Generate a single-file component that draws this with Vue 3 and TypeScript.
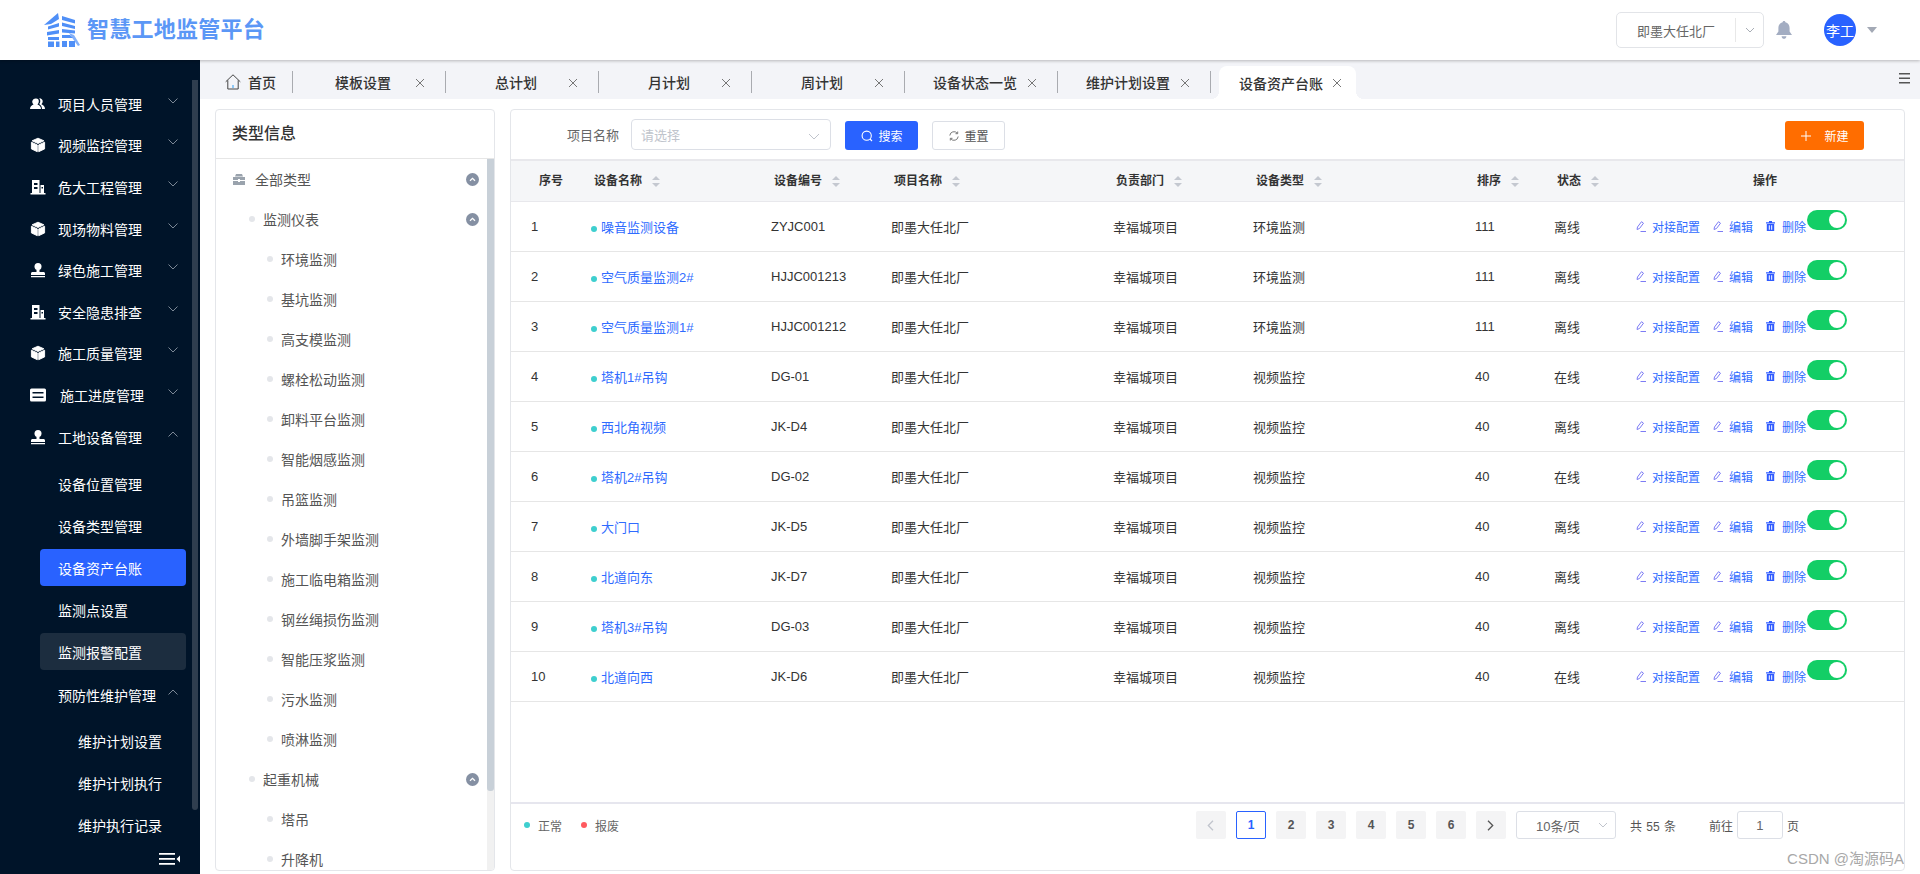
<script setup lang="ts">
interface MenuItem { label: string; icon: string; open?: boolean; nudge?: boolean }
interface TreeNode { label: string; level: number; collapsible?: boolean }
interface Row { id: number; name: string; code: string; sort: number; type: string; state: string }

const menu: MenuItem[] = [
  { label: '项目人员管理', icon: 'users' },
  { label: '视频监控管理', icon: 'cube' },
  { label: '危大工程管理', icon: 'building' },
  { label: '现场物料管理', icon: 'cube' },
  { label: '绿色施工管理', icon: 'stamp' },
  { label: '安全隐患排查', icon: 'building' },
  { label: '施工质量管理', icon: 'cube' },
  { label: '施工进度管理', icon: 'server', nudge: true },
  { label: '工地设备管理', icon: 'stamp', open: true },
]
const subMenu = ['设备位置管理', '设备类型管理', '设备资产台账', '监测点设置', '监测报警配置']
const thirdMenu = ['维护计划设置', '维护计划执行', '维护执行记录']

const tabs = ['模板设置', '总计划', '月计划', '周计划', '设备状态一览', '维护计划设置']

const tree: TreeNode[] = [
  { label: '全部类型', level: 0, collapsible: true },
  { label: '监测仪表', level: 1, collapsible: true },
  ...['环境监测', '基坑监测', '高支模监测', '螺栓松动监测', '卸料平台监测', '智能烟感监测', '吊篮监测', '外墙脚手架监测', '施工临电箱监测', '钢丝绳损伤监测', '智能压浆监测', '污水监测', '喷淋监测'].map((label) => ({ label, level: 2 })),
  { label: '起重机械', level: 1, collapsible: true },
  { label: '塔吊', level: 2 },
  { label: '升降机', level: 2 },
]

const heads = [
  { label: '设备名称', cls: 'h-name' },
  { label: '设备编号', cls: 'h-code' },
  { label: '项目名称', cls: 'h-project' },
  { label: '负责部门', cls: 'h-dept' },
  { label: '设备类型', cls: 'h-type' },
  { label: '排序', cls: 'h-sort' },
  { label: '状态', cls: 'h-state' },
]

const rows: Row[] = [
  { id: 1, name: '噪音监测设备', code: 'ZYJC001', sort: 111, type: '环境监测', state: '离线' },
  { id: 2, name: '空气质量监测2#', code: 'HJJC001213', sort: 111, type: '环境监测', state: '离线' },
  { id: 3, name: '空气质量监测1#', code: 'HJJC001212', sort: 111, type: '环境监测', state: '离线' },
  { id: 4, name: '塔机1#吊钩', code: 'DG-01', sort: 40, type: '视频监控', state: '在线' },
  { id: 5, name: '西北角视频', code: 'JK-D4', sort: 40, type: '视频监控', state: '离线' },
  { id: 6, name: '塔机2#吊钩', code: 'DG-02', sort: 40, type: '视频监控', state: '在线' },
  { id: 7, name: '大门口', code: 'JK-D5', sort: 40, type: '视频监控', state: '离线' },
  { id: 8, name: '北道向东', code: 'JK-D7', sort: 40, type: '视频监控', state: '离线' },
  { id: 9, name: '塔机3#吊钩', code: 'DG-03', sort: 40, type: '视频监控', state: '离线' },
  { id: 10, name: '北道向西', code: 'JK-D6', sort: 40, type: '视频监控', state: '在线' },
]
const pages = [1, 2, 3, 4, 5, 6]
</script>

<template>
  <div class="page">
    <header class="topbar">
      <div class="logo">
        <svg class="logo-mark" width="36" height="34" viewBox="0 0 36 34" fill="#4f8ff7">
          <path d="M0 12 14 0l1 6-8 5z" />
          <path d="M4 13.500 15 10v3.500L4 16.500zM3 19l12-2v3.500L3 22.500zM4 24h11v3H4zM4 28.500h6V34H4zM12 28.500h3.500V34H12z" />
          <path d="M18 3l13 4v3.500L18 7zM18 9.500l13 3.500v3L18 13zM18 16l13 1.500v3L18 19.500zM18 22h8l3 3H18zM18 28h5v6h-5zM25 28h6v6h-6z" />
          <path d="M25 20l5 2 6 10-2 1-5-7z" opacity=".7" />
        </svg>
        <span class="logo-text">智慧工地监管平台</span>
      </div>
      <div class="top-right">
        <div class="plant">
          <span class="plant-name">即墨大任北厂</span>
          <span class="plant-arrow">
            <svg width="10" height="6" viewBox="0 0 10 6" fill="none" stroke="#a8adb5"><path d="M1 1l4 4 4-4" /></svg>
          </span>
        </div>
        <svg class="bell" width="16" height="18" viewBox="0 0 16 18" fill="#a3adc2">
          <path d="M8 0c.8 0 1.300.5 1.400 1.300C12 2 13.600 4.200 13.600 7v3.600L16 14H0l2.400-3.400V7c0-2.800 1.600-5 4.200-5.700C6.700.5 7.200 0 8 0z" />
          <path d="M5.600 15.200h4.800c0 1.500-1 2.600-2.400 2.600s-2.400-1.100-2.400-2.600z" />
        </svg>
        <span class="avatar">李工</span>
        <span class="caret"></span>
      </div>
    </header>

    <div class="body">
      <aside class="side">
        <nav class="menu">
          <div v-for="m in menu" :key="m.label" class="m-item">
            <svg class="m-icon" width="16" height="16" viewBox="0 0 16 16" fill="#fff">
              <template v-if="m.icon === 'users'">
                <path d="M6 2.500a2.800 2.800 0 0 1 2.800 3c0 1.200-.6 2.300-1.300 2.900 2.200.6 3.500 2.300 3.500 4.600H0c0-2.300 1.400-4 3.500-4.600C2.800 7.800 2.200 6.700 2.200 5.500A3.800 3.800 0 0 1 6 2.500z" />
                <path d="M9.500 2.200c1.800 0 3.200 1.300 3.200 3.100 0 1.200-.5 2.200-1.300 2.900 2 .7 3.600 2.300 3.600 4.800h-3c0-2.300-1.100-4-2.800-5 .8-.9 1.100-1.800 1.100-2.800 0-1.200-.5-2.200-1.200-2.900z" />
              </template>
              <template v-else-if="m.icon === 'cube'">
                <g stroke="#fff" stroke-width=".9" stroke-linejoin="round">
                  <path d="M8 1.200l5.900 2.600L8 6.500 2.100 3.800z" />
                  <path d="M1.400 5.200l5.900 2.700v6.800l-5.900-2.800z" />
                  <path d="M14.600 5.200 8.700 7.900v6.800l5.900-2.800z" />
                </g>
              </template>
              <template v-else-if="m.icon === 'building'">
                <path fill-rule="evenodd" d="M2 1h7.500v13H2zM4 4v2h3.500V4zM4 8v2h3.500V8zM10.500 6H14v8h-3.500zM11.500 8v1.500H13V8zM.5 14h15v1.500H.5z" />
              </template>
              <template v-else-if="m.icon === 'stamp'">
                <circle cx="8" cy="4.500" r="3.500" />
                <path d="M6.500 7h3v3h4c.8 0 1.500.7 1.500 1.500V13H1v-1.500C1 10.700 1.700 10 2.500 10h4zM1 14h14v1.300H1z" />
              </template>
              <template v-else>
                <path fill-rule="evenodd" d="M1.500 1.500h13A1.500 1.500 0 0 1 16 3v10a1.500 1.500 0 0 1-1.500 1.500h-13A1.500 1.500 0 0 1 0 13V3a1.500 1.500 0 0 1 1.500-1.500zM2.500 5v1.400h11V5zM2.500 9.600V11h11V9.600z" />
              </template>
            </svg>
            <span class="m-label" :class="{ nudge: m.nudge }">{{ m.label }}</span>
            <svg class="chev" width="10" height="6" viewBox="0 0 10 6" fill="none" stroke="#7c8896">
              <path :d="m.open ? 'M.5 5.500 5 1l4.500 4.500' : 'M.5.500 5 5 9.500.500'" />
            </svg>
          </div>

          <div class="sub">
            <div
              v-for="s in subMenu"
              :key="s"
              class="s-item"
              :class="{ active: s === '设备资产台账', hover: s === '监测报警配置' }"
            >{{ s }}</div>
          </div>

          <div class="m-item m-prevent">
            <span class="m-label">预防性维护管理</span>
            <svg class="chev" width="10" height="6" viewBox="0 0 10 6" fill="none" stroke="#7c8896">
              <path d="M.5 5.500 5 1l4.500 4.500" />
            </svg>
          </div>
          <div class="third">
            <div v-for="t in thirdMenu" :key="t" class="t-item">{{ t }}</div>
          </div>
        </nav>
        <div class="side-foot">
          <svg width="21" height="12" viewBox="0 0 21 12" fill="#fff">
            <path d="M0 0h16v1.800H0zM0 5h16v1.800H0zM0 10h16v1.800H0zM21 2.500v7L17.500 6z" />
          </svg>
        </div>
        <div class="side-scroll"></div>
      </aside>

      <main class="main">
        <div class="tabbar">
          <div class="tab tab-home">
            <svg width="16" height="16" viewBox="0 0 16 16" fill="none" stroke="#444">
              <path d="M.7 7.800 8 .8l7.300 7M2.800 6.300V15h10.400V6.300" />
              <path d="M8 11v3" stroke="#2a9df4" />
            </svg>
            <span class="tab-title">首页</span>
          </div>
          <div v-for="t in tabs" :key="t" class="tab">
            <span class="tab-text tab-title">{{ t }}</span>
            <svg class="tab-x" width="12" height="12" viewBox="0 0 12 12" fill="none" stroke="#777">
              <path d="M2 2l8 8M10 2l-8 8" />
            </svg>
          </div>
          <div class="tab-active">
            <span class="tab-title">设备资产台账</span>
            <svg class="tab-x" width="12" height="12" viewBox="0 0 12 12" fill="none" stroke="#777">
              <path d="M2 2l8 8M10 2l-8 8" />
            </svg>
          </div>
          <svg class="tab-menu" width="11" height="11" viewBox="0 0 11 11" fill="#555">
            <path d="M0 0h11v1.500H0zM0 4.500h11V6H0zM0 9h11v1.500H0z" />
          </svg>
        </div>

        <div class="content">
          <section class="types">
            <h2 class="types-title">类型信息</h2>
            <div class="types-body">
              <ul class="tree">
                <li v-for="n in tree" :key="n.label" class="node" :class="'lv' + n.level">
                  <svg v-if="n.level === 0" width="12" height="11" viewBox="0 0 12 11" fill="#9aa3ad">
                    <path d="M3 0h6l1 2.500H2zM0 3h12v3H7V5H5v1H0zM0 7h5v1h2V7h5v4H0z" />
                  </svg>
                  <span v-else class="node-dot"></span>
                  <span class="node-label">{{ n.label }}</span>
                  <svg v-if="n.collapsible" class="node-toggle" width="13" height="13" viewBox="0 0 13 13">
                    <circle cx="6.500" cy="6.500" r="6.500" fill="#8590a3" />
                    <path d="M4 7.700l2.500-2.400L9 7.700" fill="none" stroke="#fff" stroke-width="1.300" />
                  </svg>
                </li>
              </ul>
              <div class="track"><div class="thumb"></div></div>
            </div>
          </section>

          <section class="list">
            <div class="toolbar">
              <span class="f-label">项目名称</span>
              <div class="f-select">
                <span>请选择</span>
                <svg width="12" height="7" viewBox="0 0 12 7" fill="none" stroke="#c0c4cc"><path d="M1 1l5 5 5-5" /></svg>
              </div>
              <button class="btn btn-blue" type="button">
                <svg width="12" height="12" viewBox="0 0 12 12" fill="none" stroke="#fff" stroke-width="1.100">
                  <circle cx="5.700" cy="5.700" r="4.600" /><path d="M9 9l2 2" />
                </svg>
                搜索
              </button>
              <button class="btn btn-plain" type="button">
                <svg width="10" height="10" viewBox="0 0 10 10" fill="none" stroke="#777">
                  <path d="M.8 4.500A4.200 4.200 0 0 1 8.300 2.300M9.200 5.500A4.200 4.200 0 0 1 1.700 7.700" />
                  <path d="M8.700.5v2.200H6.500M1.300 9.500V7.300h2.200" />
                </svg>
                重置
              </button>
              <button class="btn btn-orange" type="button">
                <svg width="12" height="12" viewBox="0 0 12 12" fill="none" stroke="#fff"><path d="M6 1v10M1 6h10" /></svg>
                新建
              </button>
            </div>

            <div class="table-wrap">
              <table class="table">
                <colgroup>
                  <col class="c1" /><col class="c2" /><col class="c3" /><col class="c4" />
                  <col class="c5" /><col class="c6" /><col class="c7" /><col class="c8" /><col />
                </colgroup>
                <thead>
                  <tr>
                    <th class="h-index">序号</th>
                    <th v-for="h in heads" :key="h.label" :class="h.cls">
                      <span class="th-in">
                        {{ h.label }}
                        <svg width="8" height="11" viewBox="0 0 8 11" fill="#c4c8d0">
                          <path d="M4 0l4 4H0zM0 7h8l-4 4z" />
                        </svg>
                      </span>
                    </th>
                    <th class="h-ops">操作</th>
                  </tr>
                </thead>
                <tbody>
                  <tr v-for="r in rows" :key="r.id">
                    <td class="t-index">{{ r.id }}</td>
                    <td class="t-name"><span class="live-dot"></span><a class="link">{{ r.name }}</a></td>
                    <td>{{ r.code }}</td>
                    <td>即墨大任北厂</td>
                    <td>幸福城项目</td>
                    <td>{{ r.type }}</td>
                    <td>{{ r.sort }}</td>
                    <td>{{ r.state }}</td>
                    <td>
                      <div class="ops">
                        <span class="op op-wide">
                          <svg width="10" height="11" viewBox="0 0 10 11" fill="none" stroke="#7d7cf5">
                            <path d="M1 8.500 1.500 6l4-5.300 2 1.500-4 5.300zM4.500 10.500H10" />
                          </svg>
                          对接配置
                        </span>
                        <span class="op">
                          <svg width="10" height="11" viewBox="0 0 10 11" fill="none" stroke="#7d7cf5">
                            <path d="M1 8.500 1.500 6l4-5.300 2 1.500-4 5.300zM4.500 10.500H10" />
                          </svg>
                          编辑
                        </span>
                        <span class="op">
                          <svg width="9" height="10" viewBox="0 0 9 10" fill="#2f5bff">
                            <path fill-rule="evenodd" d="M3 0h3v1.200h3V2.400H0V1.200h3zM.8 3h7.400v7H.8zM2.800 4.200v4.600h1V4.200zM5.200 4.200v4.600h1V4.200z" />
                          </svg>
                          删除
                        </span>
                        <span class="switch"><span class="knob"></span></span>
                      </div>
                    </td>
                  </tr>
                </tbody>
              </table>
            </div>

            <footer class="foot">
              <div class="legend">
                <span class="lg-dot teal"></span><span class="lg-text">正常</span>
                <span class="lg-dot red"></span><span class="lg-text">报废</span>
              </div>
              <div class="pager">
                <span class="pg">
                  <svg width="7" height="11" viewBox="0 0 7 11" fill="none" stroke="#c0c4cc" stroke-width="1.300"><path d="M6 .8 1.300 5.500 6 10.200" /></svg>
                </span>
                <span v-for="p in pages" :key="p" class="pg" :class="{ on: p === 1 }">{{ p }}</span>
                <span class="pg">
                  <svg width="7" height="11" viewBox="0 0 7 11" fill="none" stroke="#555" stroke-width="1.300"><path d="M1 .8l4.700 4.700L1 10.200" /></svg>
                </span>
                <div class="pg-size">
                  <span>10条/页</span>
                  <svg width="10" height="6" viewBox="0 0 10 6" fill="none" stroke="#c0c4cc"><path d="M1 1l4 4 4-4" /></svg>
                </div>
                <span class="pg-total">共 55 条</span>
                <span class="pg-goto">前往</span>
                <span class="pg-input">1</span>
                <span class="pg-unit">页</span>
              </div>
            </footer>
            <span class="watermark">CSDN @淘源码A</span>
          </section>
        </div>
      </main>
    </div>
  </div>
</template>

<style>
html, body { margin: 0; padding: 0; overflow: hidden; }
</style>

<style scoped>
* { box-sizing: border-box; }
.page {
  width: 1920px; height: 874px; display: flex; flex-direction: column; overflow: hidden;
  font-family: "Liberation Sans", "Noto Sans CJK SC", sans-serif; font-size: 13px; color: #333; background: #fff;
}
.topbar {
  flex: none; height: 60px; display: flex; align-items: center; padding: 0 43px 0 44px;
  background: #fff; position: relative; z-index: 2; box-shadow: 0 1px 3px rgba(0, 0, 0, .25);
}
.logo { display: flex; align-items: center; }
.logo-mark { display: block; margin-top: -1px; }
.logo-text { margin-left: 7px; font-size: 22px; font-weight: 700; letter-spacing: .25px; color: #5b97f6; line-height: 1; }
.top-right { margin-left: auto; display: flex; align-items: center; }
.plant { width: 148px; height: 36px; display: flex; align-items: center; border: 1px solid #e2e4e8; border-radius: 5px; padding-left: 20px; color: #666; font-size: 13px; }
.plant-name { width: 98px; }
.plant-arrow { flex: 1; height: 24px; border-left: 1px solid #e8e8e8; display: flex; align-items: center; justify-content: center; }
.bell { margin-left: 12px; }
.avatar { margin-left: 32px; width: 32px; height: 32px; border-radius: 50%; background: #2962ff; color: #fff; font-size: 14px; display: flex; align-items: center; justify-content: center; }
.caret { margin-left: 11px; width: 0; height: 0; border: 5px solid transparent; border-top: 6px solid #a3a9b5; border-bottom: 0; }

.body { flex: 1; min-height: 0; display: flex; }
.side { flex: none; width: 200px; background: #001429; color: #fff; display: flex; flex-direction: column; position: relative; }
.menu { flex: 1; min-height: 0; padding-top: 23px; font-size: 14px; }
.m-item { height: 41.6px; display: flex; align-items: center; padding: 0 22px 0 30px; }
.m-icon { flex: none; }
.m-label { margin-left: 12px; }
.m-label.nudge { margin-left: 14px; }
.chev { margin-left: auto; margin-top: -6px; }
.sub { margin-top: 8px; }
.s-item { height: 37px; margin: 0 14px 5px 40px; padding-left: 18px; border-radius: 4px; display: flex; align-items: center; }
.s-item.active { background: #2962ff; }
.s-item.hover { background: #1c2d3f; }
.m-prevent { padding-left: 46px; padding-right: 22px; margin-top: -1px; }
.third { padding-top: 4px; }
.t-item { height: 42px; padding-left: 78px; display: flex; align-items: center; }
.side-foot { flex: none; height: 21px; display: flex; justify-content: flex-end; align-items: flex-start; padding-right: 20px; }
.side-scroll { position: absolute; left: 192px; top: 20px; width: 6px; height: 730px; background: #2f3e4f; border-radius: 0 0 3px 3px; }

.main { flex: 1; min-width: 0; display: flex; flex-direction: column; }
.tabbar { flex: none; height: 39px; background: #f3f4f8; display: flex; align-items: flex-start; font-size: 14px; }
.tab { flex: none; width: 153px; height: 22px; margin-top: 11px; display: flex; align-items: center; border-right: 1px solid #a9abb0; }
.tab-home { width: 93px; padding-left: 25px; gap: 7px; }
.tab-title { font-weight: 500; color: #333; }
.tab-text { width: 100px; margin-left: 20px; margin-right: 1px; text-align: center; }
.tab-x { flex: none; display: block; margin-top: 1px; }
.tab-active {
  flex: none; position: relative; width: 137px; height: 33px; margin: 6px 0 0 8px; padding-left: 20px;
  display: flex; align-items: center; gap: 8px; background: #fff; border-radius: 8px 8px 0 0;
}
.tab-active::before, .tab-active::after { content: ""; position: absolute; bottom: 0; width: 8px; height: 8px; }
.tab-active::before { left: -8px; background: radial-gradient(circle at 0 0, transparent 8px, #fff 8px); }
.tab-active::after { right: -8px; background: radial-gradient(circle at 100% 0, transparent 8px, #fff 8px); }
.tab-menu { margin: 13px 10px 0 auto; }

.content { flex: 1; min-height: 0; display: flex; gap: 15px; padding: 10px 15px 3px; }
.types { flex: none; width: 280px; border: 1px solid #e4e6ea; border-radius: 4px; display: flex; flex-direction: column; overflow: hidden; }
.types-title { flex: none; margin: 0; height: 49px; padding: 0 0 4px 16px; display: flex; align-items: center; font-size: 16px; font-weight: 500; color: #333; border-bottom: 1px solid #e6e6e6; }
.types-body { flex: 1; min-height: 0; display: flex; overflow: hidden; }
.tree { flex: 1; min-width: 0; margin: 0; padding: 0; list-style: none; font-size: 14px; color: #555; }
.node { height: 40px; display: flex; align-items: center; padding-right: 8px; }
.lv0 { padding-left: 17px; gap: 10px; }
.lv1 { padding-left: 33px; gap: 8px; }
.lv2 { padding-left: 51px; gap: 8px; }
.node-dot { flex: none; width: 6px; height: 6px; border-radius: 50%; background: #e4e6ea; }
.node-toggle { margin-left: auto; }
.track { flex: none; width: 7px; background: #f1f1f1; }
.thumb { height: 632px; background: #c8d0d8; border-radius: 0 0 3px 3px; }

.list { flex: 1; min-width: 0; position: relative; border: 1px solid #e4e6ea; border-radius: 4px; display: flex; flex-direction: column; overflow: hidden; }
.toolbar { flex: none; height: 51px; padding: 0 40px 0 56px; display: flex; align-items: center; border-bottom: 2px solid #e8e8ec; }
.f-label { color: #666; margin-right: 12px; margin-top: -1px; }
.f-select { width: 200px; height: 31px; border: 1px solid #dcdfe6; border-radius: 4px; padding: 0 10px 0 9px; display: flex; align-items: center; justify-content: space-between; color: #c0c4cc; }
.f-select svg { margin-top: 3px; }
.btn { height: 29px; margin: 2px 0 0 14px; padding: 0; border: 0; border-radius: 3px; display: flex; align-items: center; justify-content: center; gap: 6px; font: inherit; font-size: 12px; width: 73px; }
.btn-blue { background: #2962ff; color: #fff; }
.btn-plain { background: #fff; color: #555; border: 1px solid #dcdfe6; }
.btn-orange { margin-left: auto; width: 79px; gap: 12px; background: #ff6d00; color: #fff; }

.table-wrap { flex: 1; min-height: 0; }
.table { width: 100%; table-layout: fixed; border-collapse: separate; border-spacing: 0; font-size: 13px; }
.c1 { width: 79px; } .c2 { width: 181px; } .c3 { width: 120px; } .c4 { width: 222px; }
.c5 { width: 140px; } .c6 { width: 222px; } .c7 { width: 79px; } .c8 { width: 82px; }
th { height: 41px; padding: 0 0 3px; text-align: left; font-size: 12px; font-weight: 700; color: #333; background: #f5f6f8; border-bottom: 1px solid #e8e8ec; }
.th-in { display: inline-flex; align-items: center; gap: 10px; }
.th-in svg { margin-top: 3px; }
.h-index { padding-left: 28px; }
.h-name { padding-left: 4px; }
.h-code, .h-project, .h-type, .h-state { padding-left: 3px; }
.h-dept { padding-left: 3px; }
.h-sort { padding-left: 2px; }
.h-ops { text-align: center; padding-right: 10px; }
td { height: 50px; padding: 0 0 1px; border-bottom: 1px solid #e6e6e6; color: #333; white-space: nowrap; }
.t-index { padding-left: 20px; }
.t-name { padding-left: 1px; }
.live-dot { display: inline-block; width: 6px; height: 6px; margin-right: 4px; border-radius: 50%; background: #3ecfcf; vertical-align: 0; }
.link { color: #2f6bff; }
.ops { display: flex; align-items: center; color: #2f6bff; font-size: 12px; }
.op { display: flex; align-items: center; gap: 6px; margin-right: 13px; }
.op-wide { margin-right: 13px; }
.op:nth-child(3) { margin-right: 1px; gap: 7px; }
.switch { flex: none; width: 40px; height: 20px; margin-bottom: 13px; border-radius: 10px; background: #13ce66; display: flex; align-items: center; justify-content: flex-end; padding-right: 2px; }
.knob { width: 16px; height: 16px; border-radius: 50%; background: #fff; }

.foot { flex: none; height: 68px; padding: 7px 105px 0 13px; border-top: 2px solid #e6e6ee; display: flex; align-items: flex-start; }
.legend { height: 28px; display: flex; align-items: center; font-size: 12px; color: #666; }
.lg-dot { width: 6px; height: 6px; border-radius: 50%; margin-right: 8px; }
.lg-text { margin-right: 19px; }
.teal { background: #3ecfcf; }
.red { background: #ff5a5f; }
.pager { margin-left: auto; display: flex; align-items: center; height: 28px; font-size: 12px; color: #555; }
.pg { width: 30px; height: 28px; margin-right: 10px; background: #f4f4f5; border-radius: 2px; display: flex; align-items: center; justify-content: center; font-weight: 700; }
.pg.on { background: #fff; border: 1px solid #2962ff; color: #2962ff; }
.pg-size { width: 100px; height: 28px; border: 1px solid #dcdfe6; border-radius: 3px; display: flex; align-items: center; justify-content: space-between; padding: 0 7px 0 19px; font-size: 13px; color: #666; }
.pg-total { margin-left: 14px; font-size: 12px; color: #555; word-spacing: 1px; width: 46px; white-space: nowrap; }
.pg-goto { margin-left: 33px; color: #555; }
.pg-input { width: 46px; height: 28px; margin: 0 4px; border: 1px solid #dcdfe6; border-radius: 3px; display: flex; align-items: center; justify-content: center; color: #666; font-size: 13px; }
.pg-unit { color: #555; }
.watermark { position: absolute; right: 0; bottom: 2px; font-size: 15px; line-height: 18px; color: #a8a8a8; white-space: nowrap; }
</style>
